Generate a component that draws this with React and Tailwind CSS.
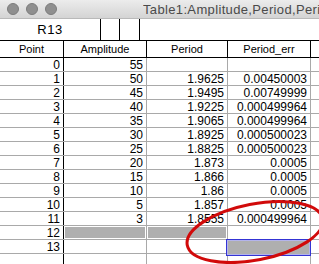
import React from 'react';

const ROWS = [
  ['0', '55', '', ''],
  ['1', '50', '1.9625', '0.00450003'],
  ['2', '45', '1.9495', '0.00749999'],
  ['3', '40', '1.9225', '0.000499964'],
  ['4', '35', '1.9065', '0.000499964'],
  ['5', '30', '1.8925', '0.000500023'],
  ['6', '25', '1.8825', '0.000500023'],
  ['7', '20', '1.873', '0.0005'],
  ['8', '15', '1.866', '0.0005'],
  ['9', '10', '1.86', '0.0005'],
  ['10', '5', '1.857', '0.0005'],
  ['11', '3', '1.8555', '0.000499964'],
  ['12', 'sel', 'sel', ''],
  ['13', '', '', 'cur'],
];

const font = { fontFamily: '"Liberation Sans", Arial, sans-serif' };

function Cell({ value, className }) {
  if (value === 'sel') {
    return (
      <div className={`${className} flex p-[1px]`}>
        <div className="flex-1 bg-[#afafaf]" />
      </div>
    );
  }
  if (value === 'cur') {
    return (
      <div className={`${className} relative`}>
        <div className="absolute -left-[2px] -top-[1px] -right-[1px] -bottom-[3px] border border-[#3434d4] z-10">
          <div className="w-full h-full border border-[#b4b4ec] bg-[#afafaf]" />
        </div>
      </div>
    );
  }
  return <div className={`${className} text-right pr-[3px] truncate`}>{value}</div>;
}

export default function App() {
  return (
    <div className="relative w-[319px] h-[264px] overflow-hidden bg-white text-black" style={font}>
      {/* title bar */}
      <div className="h-[19px] flex items-center border-b border-[#b9b9b9] bg-gradient-to-b from-[#ececec] to-[#d4d4d4]">
        <div className="flex items-center gap-[7px] pl-[7px]">
          <div className="w-[12px] h-[12px] rounded-full bg-[#8f8f8f] border border-[#7c7c7c]" />
          <div className="w-[12px] h-[12px] rounded-full bg-[#8f8f8f] border border-[#7c7c7c]" />
          <div className="w-[12px] h-[12px] rounded-full bg-[#8f8f8f] border border-[#7c7c7c]" />
        </div>
        <div className="ml-[86px] flex-1 min-w-0 overflow-hidden text-[13px] tracking-[0.35px] text-[#4a4a4a] whitespace-nowrap leading-none">
          Table1:Amplitude,Period,Period_err
        </div>
      </div>

      {/* cell ref row */}
      <div className="flex h-[21px] text-[13px]">
        <div className="w-[101px] border-r border-black flex items-center justify-center tracking-[0.5px]">R13</div>
        <div className="w-[19px] border-r border-black" />
        <div className="w-[20px] border-r border-black" />
      </div>

      {/* header */}
      <div className="flex h-[18px] border-y border-black text-[11px] leading-[16px]">
        <div className="w-[64px] border-r border-black text-center">Point</div>
        <div className="w-[83px] border-r border-black text-center">Amplitude</div>
        <div className="w-[81px] border-r border-black text-center">Period</div>
        <div className="w-[83px] border-r border-black text-center">Period_err</div>
        <div className="flex-1" />
      </div>

      {/* body */}
      <div className="text-[12px] leading-[14px]">
        {ROWS.map((r) => (
          <div key={r[0]} className="flex h-[14px] border-b border-[#a9a9a9]">
            <div className="w-[64px] border-r border-black text-right pr-[3px]">{r[0]}</div>
            <Cell value={r[1]} className="w-[83px] border-r border-[#a9a9a9]" />
            <Cell value={r[2]} className="w-[81px] border-r border-[#a9a9a9]" />
            <Cell value={r[3]} className="w-[83px] border-r border-[#a9a9a9]" />
            <div className="flex-1" />
          </div>
        ))}
        <div className="flex h-[14px]">
          <div className="w-[64px] border-r border-black" />
          <div className="w-[83px] border-r border-[#a9a9a9]" />
          <div className="w-[81px] border-r border-[#a9a9a9]" />
          <div className="w-[83px] border-r border-[#a9a9a9]" />
        </div>
      </div>

      {/* red annotation */}
      <svg className="absolute inset-0 pointer-events-none z-20" width="319" height="264">
        <ellipse cx="255" cy="232" rx="69" ry="28" transform="rotate(-11 255 232)" fill="none" stroke="#d10a0a" strokeWidth="3" />
      </svg>
    </div>
  );
}
